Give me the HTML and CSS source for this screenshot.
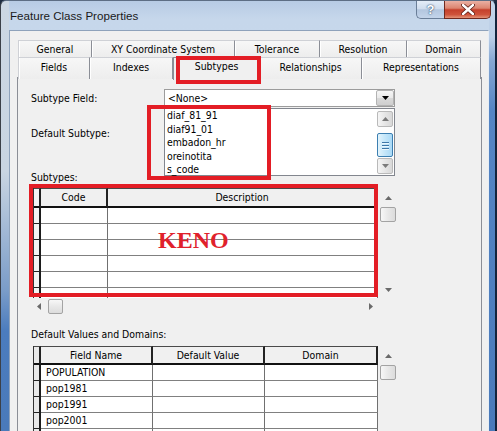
FILE: index.html
```html
<!DOCTYPE html>
<html>
<head>
<meta charset="utf-8">
<title>Feature Class Properties</title>
<link rel="stylesheet" href="styles.css">
</head>
<body>
<div class="window">
  <div class="titlebar">
    <span class="title">Feature Class Properties</span>
    <div class="caption">
      <div class="cbtn help">?</div>
      <div class="cbtn close">
        <svg width="14" height="11" viewBox="0 0 14 11"><path d="M2 1 L12 10 M12 1 L2 10" stroke="#5a1a12" stroke-width="4" stroke-linecap="round"/><path d="M2 1 L12 10 M12 1 L2 10" stroke="#fff" stroke-width="2.4" stroke-linecap="round"/></svg>
      </div>
    </div>
  </div>
  <div class="client">
    <div class="tabs">
      <div class="tabrow back">
        <div class="tab first">General</div>
        <div class="tab">XY Coordinate System</div>
        <div class="tab">Tolerance</div>
        <div class="tab">Resolution</div>
        <div class="tab">Domain</div>
      </div>
      <div class="tabrow front">
        <div class="tab first">Fields</div>
        <div class="tab">Indexes</div>
        <div class="tab selected">Subtypes<div class="mark mark-tab"></div></div>
        <div class="tab">Relationships</div>
        <div class="tab">Representations</div>
      </div>
    </div>
    <div class="page">
      <div class="field-row">
        <div class="label col">Subtype Field:</div>
        <div class="combo">
          <span class="combo-text">&lt;None&gt;</span>
          <div class="combo-btn"><svg width="7" height="4" viewBox="0 0 7 4"><polygon points="0,0 7,0 3.5,4" fill="#000"/></svg></div>
        </div>
      </div>
      <div class="field-row list-row">
        <div class="col labels">
          <div class="label l1">Default Subtype:</div>
          <div class="label l2">Subtypes:</div>
        </div>
        <div class="listbox">
          <div class="items">
            <div class="item">diaf_81_91</div>
            <div class="item">diaf91_01</div>
            <div class="item">embadon_hr</div>
            <div class="item">oreinotita</div>
            <div class="item">s_code</div>
          </div>
          <div class="lscroll">
            <div class="sbtn"><svg width="7" height="4" viewBox="0 0 7 4"><polygon points="0,4 7,4 3.5,0" fill="#7a7a7a"/></svg></div>
            <div class="sthumb"><span></span><span></span><span></span></div>
            <div class="sbtn down"><svg width="7" height="4" viewBox="0 0 7 4"><polygon points="0,0 7,0 3.5,4" fill="#7a7a7a"/></svg></div>
          </div>
          <div class="mark mark-list"></div>
        </div>
      </div>

      <div class="grid-block top-block">
        <div class="grid-main">
          <div class="grid g-top">
            <div class="row head"><div class="rh"></div><div class="cell">Code</div><div class="cell">Description</div></div>
            <div class="row"><div class="rh"></div><div class="cell"></div><div class="cell"></div></div>
            <div class="row"><div class="rh"></div><div class="cell"></div><div class="cell"></div></div>
            <div class="row"><div class="rh"></div><div class="cell"></div><div class="cell"></div></div>
            <div class="row"><div class="rh"></div><div class="cell"></div><div class="cell"></div></div>
            <div class="row"><div class="rh"></div><div class="cell"></div><div class="cell"></div></div>
            <div class="row"><div class="rh"></div><div class="cell"></div><div class="cell"></div></div>
          </div>
          <div class="vscroll">
            <div class="arrow up"><svg width="7" height="4" viewBox="0 0 7 4"><polygon points="0,4 7,4 3.5,0" fill="#6a6a6a"/></svg></div>
            <div class="thumb"></div>
            <div class="vspace"></div>
            <div class="arrow dn"><svg width="7" height="4" viewBox="0 0 7 4"><polygon points="0,0 7,0 3.5,4" fill="#6a6a6a"/></svg></div>
          </div>
        </div>
        <div class="hscroll">
          <div class="harrow"><svg width="4" height="7" viewBox="0 0 4 7"><polygon points="4,0 4,7 0,3.5" fill="#6a6a6a"/></svg></div>
          <div class="hthumb"></div>
          <div class="hspace"></div>
          <div class="harrow"><svg width="4" height="7" viewBox="0 0 4 7"><polygon points="0,0 0,7 4,3.5" fill="#6a6a6a"/></svg></div>
        </div>
        <div class="keno">KENO</div>
        <div class="mark mark-grid"></div>
      </div>

      <div class="label section">Default Values and Domains:</div>

      <div class="grid-block">
        <div class="grid-main bottom-main">
          <div class="grid g-bottom">
            <div class="row head"><div class="rh"></div><div class="cell">Field Name</div><div class="cell">Default Value</div><div class="cell">Domain</div></div>
            <div class="row"><div class="rh"></div><div class="cell">POPULATION</div><div class="cell"></div><div class="cell"></div></div>
            <div class="row"><div class="rh"></div><div class="cell">pop1981</div><div class="cell"></div><div class="cell"></div></div>
            <div class="row"><div class="rh"></div><div class="cell">pop1991</div><div class="cell"></div><div class="cell"></div></div>
            <div class="row"><div class="rh"></div><div class="cell">pop2001</div><div class="cell"></div><div class="cell"></div></div>
            <div class="row"><div class="rh"></div><div class="cell"></div><div class="cell"></div><div class="cell"></div></div>
          </div>
          <div class="vscroll">
            <div class="arrow up"><svg width="7" height="4" viewBox="0 0 7 4"><polygon points="0,4 7,4 3.5,0" fill="#6a6a6a"/></svg></div>
            <div class="thumb"></div>
          </div>
        </div>
      </div>
    </div>
  </div>
</div>
</body>
</html>
```

FILE: styles.css
```css
* { box-sizing: border-box; }
html, body { margin: 0; padding: 0; }
body {
  width: 497px;
  height: 431px;
  overflow: hidden;
  font-family: "DejaVu Sans Condensed", "DejaVu Sans", "Liberation Sans", sans-serif;
  font-size: 10.4px;
  color: #000;
  background: #1f2d42;
}

.window {
  width: 497px;
  height: 431px;
  overflow: hidden;
  display: flex;
  flex-direction: column;
  border-left: 1px solid #3b4048;
  border-right: 2px solid #14243c;
  border-top: 1px solid #5d6e84;
  border-radius: 6px 6px 0 0;
  background:
    linear-gradient(to bottom, #ccd7e3 0, #c9d5e2 170px, #7a9cc8 290px, #4b7cbe 330px, #4a7aba 100%) left top / 8px 100% no-repeat,
    linear-gradient(to bottom, #c5d6ea 0, #bccfe7 36px, #86a7d2 60px, #5585c4 110px, #4a7aba 100%) right top / 6px 100% no-repeat,
    linear-gradient(to bottom, #b7cbe4 0, #c6d7eb 18px, #cbdaed 100%);
}

/* title bar */
.titlebar {
  height: 29px;
  flex: none;
  display: flex;
  align-items: flex-start;
  padding-left: 9px;
}
.title {
  font-family: "Liberation Sans", Arial, sans-serif;
  font-size: 11.6px;
  line-height: 29px;
  color: #1a1a1a;
  flex: 1;
}
.caption {
  display: flex;
  margin-right: 4px;
}
.cbtn {
  height: 18px;
  display: flex;
  align-items: center;
  justify-content: center;
}
.help {
  width: 28px;
  border: 1px solid #6a7e98;
  border-top: none;
  border-right: none;
  border-radius: 0 0 0 5px;
  background: linear-gradient(to bottom, #e4edf8 0, #d0ddee 45%, #b3c6df 52%, #c3d4ea 100%);
  color: #fff;
  font-family: "Liberation Sans", Arial, sans-serif;
  font-weight: bold;
  font-size: 13px;
  text-shadow: 0 0 2px #35506f, 0 0 1px #35506f;
}
.close {
  width: 47px;
  border: 1px solid #70291f;
  border-top: none;
  border-radius: 0 0 5px 0;
  background: linear-gradient(to bottom, #eab0a3 0, #dc8570 42%, #c5402b 52%, #cf533b 80%, #e39277 100%);
}

/* client */
.client {
  flex: 1;
  min-height: 0;
  margin: 0 6px 0 8px;
  border-top: 1px solid #8ea2bb;
  border-left: 1px solid #8ea2bb;
  border-right: 1px solid #e6edf5;
  background: #f0f0f0;
  padding-top: 9px;
  display: flex;
  flex-direction: column;
}

/* tabs */
.tabs {
  padding-left: 8px;
  position: relative;
  z-index: 2;
}
.tabrow {
  display: grid;
}
.tabrow.back {
  grid-template-columns: 74px 143px 85px 87px 74px;
  height: 17px;
}
.tabrow.front {
  grid-template-columns: 72px 83px 87px 102px 119px;
  height: 20px;
  align-items: end;
}
.tab {
  height: 100%;
  border-top: 1px solid #cfd1d6;
  border-right: 1px solid #8b8e96;
  box-shadow: inset 1px 0 0 #ffffff;
  background: linear-gradient(to bottom, #f7f7f7, #ededed);
  text-align: center;
  white-space: nowrap;
}
.tab.first { border-left: 1px solid #cfd1d6; }
.back .tab { line-height: 16px; }
.front .tab { line-height: 19px; }
.tab.selected {
  position: relative;
  height: 23px;
  margin-bottom: -1px;
  line-height: 17px;
  border-left: 1px solid #8b8e96;
  border-top: 1px solid #8b8e96;
  background: #f0f0f0;
  box-shadow: none;
}

/* annotation marks */
.mark {
  position: absolute;
  border: 4px solid #e31d25;
  pointer-events: none;
}
.mark-tab { left: 2px; top: -2px; width: 85px; height: 28px; }
.mark-list { left: -18px; top: -4px; width: 124px; height: 75px; }
.mark-grid { left: -4px; top: -4px; width: 349px; height: 113px; }

/* page */
.page {
  margin-left: 7px;
  width: 465px;
  flex: 1;
  min-height: 0;
  overflow: hidden;
  border: 1px solid #8b8e96;
  border-bottom: none;
  background: #f0f0f0;
  padding-left: 13px;
  position: relative;
  z-index: 1;
}
.label { line-height: 13px; white-space: nowrap; }
.field-row { display: flex; align-items: center; margin-top: 11px; }
.field-row .col { width: 133px; flex: none; }
.list-row { margin-top: 1px; align-items: flex-start; }
.labels { padding-top: 19px; }
.l2 { margin-top: 31px; }

.combo {
  width: 231px;
  height: 18px;
  border: 1px solid #9c9c9c;
  background: #fff;
  display: flex;
  align-items: stretch;
}
.combo-text { flex: 1; padding-left: 3px; line-height: 16px; }
.combo-btn {
  width: 18px;
  border: 1px solid #b3b3b3;
  border-radius: 2px;
  background: linear-gradient(to bottom, #f6f6f6 0, #e9e9e9 50%, #d9d9d9 51%, #cfcfcf 100%);
  display: flex;
  align-items: center;
  justify-content: center;
}

.listbox {
  position: relative;
  width: 231px;
  height: 68px;
  border: 1px solid #82868e;
  background: #fff;
  display: flex;
}
.items { flex: 1; padding-left: 2px; }
.item { line-height: 13.5px; }
.lscroll {
  width: 17px;
  display: flex;
  flex-direction: column;
  padding-right: 1px;
  padding-top: 2px;
  background: #fdfdfd;
}
.sbtn {
  height: 16px;
  border: 1px solid #b9b9b9;
  border-radius: 2px;
  background: linear-gradient(to right, #f5f5f5, #e6e6e6 50%, #d8d8d8);
  display: flex;
  align-items: center;
  justify-content: center;
}
.sbtn.down { margin-top: 1px; }
.sthumb {
  margin-top: 6px;
  height: 24px;
  border: 1px solid #3c7fb1;
  border-radius: 2px;
  background: linear-gradient(to right, #e3f4fc, #c4e6f9 50%, #a9d9f6);
  display: flex;
  flex-direction: column;
  align-items: center;
  justify-content: center;
  gap: 2px;
}
.sthumb span {
  width: 7px;
  height: 1px;
  background: #3f78a8;
  box-shadow: 0 1px 0 #eaf7fe;
}

/* grids */
.grid-block {
  position: relative;
  margin-left: 2px;
  width: 363px;
}
.top-block { margin-top: 4px; }
.grid-main { display: flex; height: 110px; }
.bottom-main { height: 85px; }
.grid {
  width: 345px;
  height: 100%;
  overflow: hidden;
  background: #fff;
  border-left: 1px solid #333;
}
.row { display: grid; height: 16px; }
.g-top .row { grid-template-columns: 7px 67px 1fr; }
.g-bottom .row { grid-template-columns: 7px 112px 112px 1fr; }
.row .rh {
  border-right: 2px solid #1c1c1c;
  border-bottom: 1px solid #222;
  background: #f4f4f4;
}
.g-bottom .row .rh { background: #e9e9e9; }
.row .cell {
  border-right: 1px solid #707070;
  border-bottom: 1px solid #808080;
  padding-left: 5px;
  line-height: 15px;
  white-space: nowrap;
  overflow: hidden;
}
.row.head { background: #f0f0f0; }
.row.head > div {
  border-top: 1px solid #4a4a4a;
  border-bottom: 2px solid #111;
  border-right: 2px solid #222;
}
.row.head .cell { text-align: center; padding-left: 0; line-height: 16px; }
.g-top .row.head { height: 20px; }
.g-bottom .row.head { height: 19px; }

.vscroll {
  width: 16px;
  margin-left: 2px;
  display: flex;
  flex-direction: column;
}
.arrow { height: 19px; display: flex; align-items: center; justify-content: center; }
.thumb {
  height: 15px;
  border: 1px solid #a3a3a3;
  border-radius: 2px;
  background: linear-gradient(to right, #f7f7f7, #e8e8e8 50%, #dcdcdc);
}
.vspace { flex: 1; }
.arrow.dn { height: 17px; }

.hscroll {
  width: 345px;
  height: 17px;
  display: flex;
  align-items: center;
  padding-left: 3px;
  padding-right: 4px;
}
.harrow { width: 6px; display: flex; justify-content: center; }
.hthumb {
  margin-left: 6px;
  width: 15px;
  height: 15px;
  border: 1px solid #a3a3a3;
  border-radius: 2px;
  background: linear-gradient(to bottom, #f7f7f7, #e8e8e8 50%, #dcdcdc);
}
.hspace { flex: 1; }

.keno {
  position: absolute;
  left: 125px;
  top: 40px;
  font-family: "Liberation Serif", "Times New Roman", serif;
  font-weight: bold;
  font-size: 24px;
  line-height: 24px;
  color: #e0212b;
}

.section { margin-top: 13px; margin-bottom: 5px; }
```
